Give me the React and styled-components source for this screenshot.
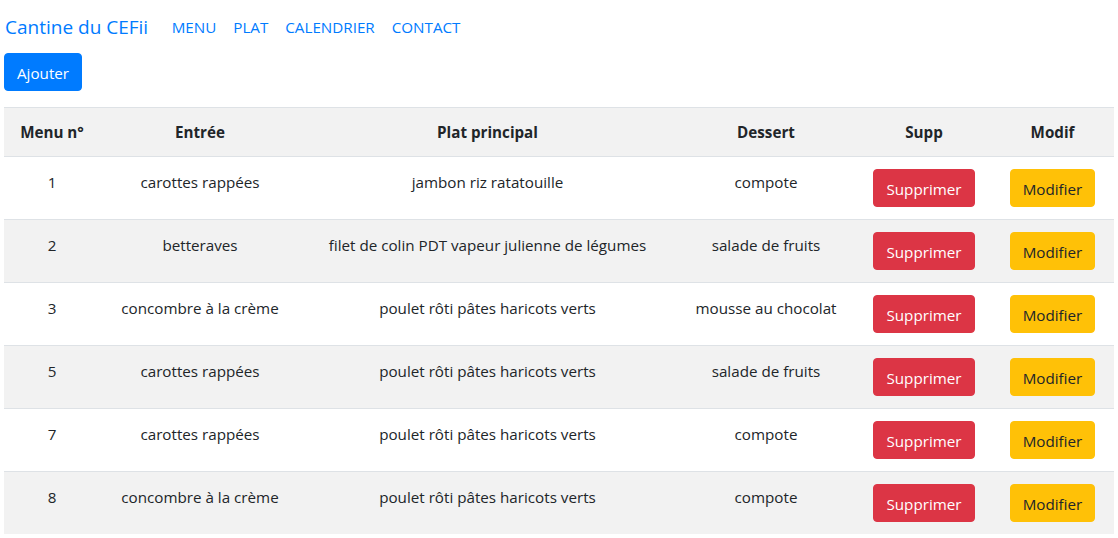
import React from "react";
import styled, { createGlobalStyle } from "styled-components";

const GlobalStyle = createGlobalStyle`
  body {
    margin: 0;
    font-family: "Open Sans", "Noto Sans", sans-serif;
    font-size: 15.2px;
    line-height: 24px;
    color: #212529;
    background: #fff;
  }
`;

const Page = styled.div`
  padding: 0 4px;
`;

const Navbar = styled.nav`
  display: flex;
  align-items: center;
  height: 53px;
  padding-left: 1px;
`;

const Brand = styled.a`
  font-size: 19px;
  line-height: 30px;
  color: #007bff;
  text-decoration: none;
  margin-right: 15px;
`;

const NavLink = styled.a`
  color: #007bff;
  text-decoration: none;
  padding: 0 8.5px;
`;

const Button = styled.button`
  font-family: inherit;
  font-size: 15.2px;
  line-height: 24px;
  padding: 7px 12px 5px;
  border: 1px solid ${(p) => p.bg};
  border-radius: 4px;
  background: ${(p) => p.bg};
  color: ${(p) => p.fg};
  cursor: pointer;
`;

const Toolbar = styled.div`
  margin-bottom: 16px;
`;

const Table = styled.table`
  width: 100%;
  border-collapse: collapse;
  table-layout: fixed;
`;

const Row = styled.tr`
  background: ${(p) => (p.striped ? "#f2f2f2" : "#fff")};
`;

const Th = styled.th`
  padding: 12px;
  border-top: 1px solid #dee2e6;
  font-weight: 700;
  text-align: center;
  vertical-align: top;
`;

const Td = styled.td`
  padding: 12px;
  border-top: 1px solid #dee2e6;
  text-align: center;
  vertical-align: top;
  white-space: nowrap;
`;

const CellText = styled.span`
  display: block;
  padding-top: 1px;
`;

const menus = [
  { id: 1, entree: "carottes rappées", plat: "jambon riz ratatouille", dessert: "compote" },
  { id: 2, entree: "betteraves", plat: "filet de colin PDT vapeur julienne de légumes", dessert: "salade de fruits" },
  { id: 3, entree: "concombre à la crème", plat: "poulet rôti pâtes haricots verts", dessert: "mousse au chocolat" },
  { id: 5, entree: "carottes rappées", plat: "poulet rôti pâtes haricots verts", dessert: "salade de fruits" },
  { id: 7, entree: "carottes rappées", plat: "poulet rôti pâtes haricots verts", dessert: "compote" },
  { id: 8, entree: "concombre à la crème", plat: "poulet rôti pâtes haricots verts", dessert: "compote" },
];

export default function App() {
  return (
    <Page>
      <GlobalStyle />
      <Navbar>
        <Brand href="#">Cantine du CEFii</Brand>
        <NavLink href="#">MENU</NavLink>
        <NavLink href="#">PLAT</NavLink>
        <NavLink href="#">CALENDRIER</NavLink>
        <NavLink href="#">CONTACT</NavLink>
      </Navbar>
      <Toolbar>
        <Button bg="#007bff" fg="#fff">Ajouter</Button>
      </Toolbar>
      <Table>
        <colgroup>
          <col style={{ width: 96 }} />
          <col style={{ width: 200 }} />
          <col style={{ width: 375 }} />
          <col style={{ width: 182 }} />
          <col style={{ width: 134 }} />
          <col style={{ width: 123 }} />
        </colgroup>
        <thead>
          <Row striped>
            <Th>Menu n°</Th>
            <Th>Entrée</Th>
            <Th>Plat principal</Th>
            <Th>Dessert</Th>
            <Th>Supp</Th>
            <Th>Modif</Th>
          </Row>
        </thead>
        <tbody>
          {menus.map((m, i) => (
            <Row key={m.id} striped={i % 2 === 1}>
              <Td>
                <CellText>{m.id}</CellText>
              </Td>
              <Td>
                <CellText>{m.entree}</CellText>
              </Td>
              <Td>
                <CellText>{m.plat}</CellText>
              </Td>
              <Td>
                <CellText>{m.dessert}</CellText>
              </Td>
              <Td>
                <Button bg="#dc3545" fg="#fff">Supprimer</Button>
              </Td>
              <Td>
                <Button bg="#ffc107" fg="#212529">Modifier</Button>
              </Td>
            </Row>
          ))}
        </tbody>
      </Table>
    </Page>
  );
}
